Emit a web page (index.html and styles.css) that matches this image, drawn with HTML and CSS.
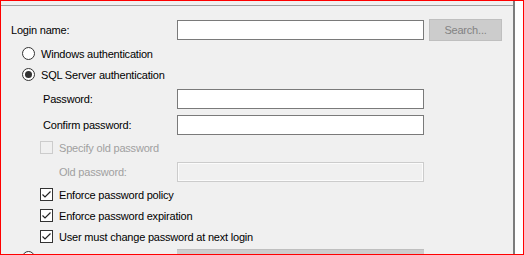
FILE: index.html
```html
<!DOCTYPE html>
<html lang="en">
<head>
    <meta charset="UTF-8">
    <title>Login - New</title>
    <link rel="stylesheet" href="styles.css">
</head>
<body>
    <div class="frame">
        <div class="dialog">
            <div class="panel">
                <div class="row login-row">
                    <span class="label">Login name:</span>
                    <div class="field"></div>
                    <button class="btn" disabled>Search...</button>
                </div>

                <div class="row option">
                    <span class="radio"></span>
                    <span>Windows authentication</span>
                </div>
                <div class="row option">
                    <span class="radio checked"></span>
                    <span>SQL Server authentication</span>
                </div>

                <div class="row field-row pw-row">
                    <span class="label">Password:</span>
                    <div class="field"></div>
                </div>
                <div class="row field-row confirm-row">
                    <span class="label">Confirm password:</span>
                    <div class="field"></div>
                </div>

                <div class="row check-row specify-row disabled">
                    <span class="check"></span>
                    <span>Specify old password</span>
                </div>
                <div class="row field-row old-row disabled">
                    <span class="label">Old password:</span>
                    <div class="field off"></div>
                </div>

                <div class="row check-row policy-row">
                    <span class="check on">
                        <svg width="11" height="11" viewBox="0 0 11 11"><polyline points="1.5,5.5 4,8 9.5,2.5" fill="none" stroke="#222" stroke-width="1.2"/></svg>
                    </span>
                    <span>Enforce password policy</span>
                </div>
                <div class="row check-row">
                    <span class="check on">
                        <svg width="11" height="11" viewBox="0 0 11 11"><polyline points="1.5,5.5 4,8 9.5,2.5" fill="none" stroke="#222" stroke-width="1.2"/></svg>
                    </span>
                    <span>Enforce password expiration</span>
                </div>
                <div class="row check-row">
                    <span class="check on">
                        <svg width="11" height="11" viewBox="0 0 11 11"><polyline points="1.5,5.5 4,8 9.5,2.5" fill="none" stroke="#222" stroke-width="1.2"/></svg>
                    </span>
                    <span>User must change password at next login</span>
                </div>

                <div class="row mapped-row">
                    <div class="mapped-label">
                        <span class="radio"></span>
                        <span>Mapped to certificate</span>
                    </div>
                    <div class="combo"></div>
                </div>
            </div>
        </div>
        <div class="side"></div>
    </div>
</body>
</html>
```

FILE: styles.css
```css
body {
    margin: 0;
    background: #fff;
    font-family: "Liberation Sans", Arial, sans-serif;
    font-size: 11px;
    letter-spacing: -0.2px;
    color: #000;
}
.frame {
    width: 524px;
    height: 255px;
    box-sizing: border-box;
    border: 1px solid #f00;
    display: flex;
    overflow: hidden;
}
.dialog {
    width: 514px;
    height: 100%;
    box-sizing: border-box;
    background: #f0f0f0;
    padding-top: 4px;
    border-right: 2px solid #7c7c7c;
}
.side {
    flex: 1;
    background: #fff;
}
.panel {
    border-top: 1px solid #a0a0a0;
    padding: 13px 0 0 10px;
}
.row {
    display: flex;
    align-items: center;
}
.label {
    width: 166px;
    flex-shrink: 0;
}
.field {
    width: 247px;
    height: 20px;
    box-sizing: border-box;
    background: #fff;
    border: 1px solid #7a7a7a;
}
.field.off {
    background: #f0f0f0;
    border-color: #cccccc;
    box-shadow: inset 0 0 0 1px #fbfbfb;
}
.btn {
    width: 73px;
    height: 22px;
    margin-left: 5px;
    padding: 0;
    background: #cccccc;
    border: 1px solid #bfbfbf;
    color: #838383;
    font: inherit;
    letter-spacing: inherit;
}

.login-row {
    height: 22px;
}
.option {
    height: 21px;
    padding-left: 11px;
}
.login-row + .option {
    margin-top: 2px;
}
.radio {
    width: 13px;
    height: 13px;
    box-sizing: border-box;
    border: 1px solid #333;
    border-radius: 50%;
    background: #fff;
    margin-right: 6px;
    display: flex;
    align-items: center;
    justify-content: center;
    flex-shrink: 0;
}
.radio.checked::after {
    content: "";
    width: 7px;
    height: 7px;
    border-radius: 50%;
    background: #333;
}

.field-row {
    height: 20px;
}
.field-row .label {
    width: 134px;
}
.pw-row {
    margin-top: 4px;
    padding-left: 32px;
}
.confirm-row {
    margin-top: 6px;
    padding-left: 32px;
}
.old-row {
    margin-top: 4px;
    padding-left: 48px;
}
.old-row .label {
    width: 118px;
}

.check-row {
    height: 21px;
    padding-left: 29px;
}
.specify-row {
    margin-top: 2px;
}
.policy-row {
    margin-top: 2px;
}
.check {
    width: 13px;
    height: 13px;
    box-sizing: border-box;
    border: 1px solid #333;
    background: #fff;
    margin-right: 6px;
    flex-shrink: 0;
}
.check svg {
    display: block;
}
.disabled {
    color: #a0a0a0;
}
.disabled .check {
    border-color: #cccccc;
    background: #f0f0f0;
}

.mapped-row {
    height: 22px;
    margin-top: 2px;
    align-items: flex-start;
}
.mapped-label {
    width: 155px;
    padding: 2px 0 0 11px;
    display: flex;
    align-items: flex-start;
    line-height: 13px;
}
.mapped-label span:last-child {
    padding-top: 3px;
}
.combo {
    width: 247px;
    height: 22px;
    box-sizing: border-box;
    background: #cccccc;
    border-top: 1px solid #bfbfbf;
}
```
